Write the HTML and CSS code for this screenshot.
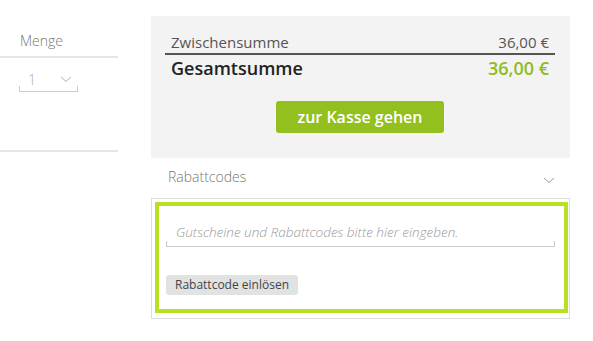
FILE: index.html
```html
<!DOCTYPE html>
<html lang="de">
<head>
    <meta charset="UTF-8">
    <meta name="viewport" content="width=device-width, initial-scale=1.0">
    <title>Warenkorb</title>
    <link rel="stylesheet" href="styles.css">
</head>
<body>
    <div class="page">
        <div class="qty-col">
            <div class="qty-head">Menge</div>
            <div class="qty-body">
                <div class="qty-select">
                    <span>1</span>
                    <svg class="chev" width="12" height="7" viewBox="0 0 12 7"><path d="M1 1l5 4.5L11 1" fill="none" stroke="#ccc" stroke-width="1.2"/></svg>
                </div>
            </div>
        </div>

        <div class="summary-col">
            <div class="totals">
                <div class="row subtotal">
                    <span>Zwischensumme</span>
                    <span>36,00 €</span>
                </div>
                <div class="row total">
                    <span>Gesamtsumme</span>
                    <span class="price">36,00 €</span>
                </div>
                <div class="checkout">
                    <button class="checkout-btn">zur Kasse gehen</button>
                </div>
            </div>

            <div class="coupon-head">
                <span>Rabattcodes</span>
                <svg width="12" height="7" viewBox="0 0 12 7"><path d="M1 1l5 4.5L11 1" fill="none" stroke="#999" stroke-width="1"/></svg>
            </div>

            <div class="coupon-box">
                <div class="coupon-inner">
                    <input class="coupon-input" type="text" placeholder="Gutscheine und Rabattcodes bitte hier eingeben.">
                    <button class="coupon-btn">Rabattcode einlösen</button>
                </div>
            </div>
        </div>
    </div>
</body>
</html>
```

FILE: styles.css
```css
body {
    margin: 0;
    padding: 0;
    background: #fff;
    font-family: 'Open Sans', 'Liberation Sans', sans-serif;
    color: #333;
}
.page {
    display: flex;
    align-items: flex-start;
}
.qty-col {
    width: 118px;
    padding-top: 31px;
}
.qty-head {
    padding-left: 20px;
    font-size: 14px;
    font-weight: 300;
    color: #777;
    line-height: 20px;
    padding-bottom: 5px;
    border-bottom: 2px solid #e6e6e6;
}
.qty-body {
    height: 94px;
    border-bottom: 2px solid #e6e6e6;
    padding-top: 10px;
    box-sizing: border-box;
}
.qty-select {
    margin-left: 19px;
    width: 59px;
    height: 24px;
    display: flex;
    align-items: center;
    justify-content: space-between;
    padding: 0 6px 0 9px;
    box-sizing: border-box;
    font-size: 14px;
    font-weight: 300;
    color: #aaa;
    border-bottom: 1px solid #ccc;
    background:
        linear-gradient(#ccc, #ccc) left bottom / 1px 5px no-repeat,
        linear-gradient(#ccc, #ccc) right bottom / 1px 5px no-repeat;
}
.summary-col {
    margin-left: 33px;
    margin-top: 16px;
    width: 419px;
}
.totals {
    background: #f3f3f3;
    padding: 16px 15px 25px 14px;
}
.row {
    display: flex;
    justify-content: space-between;
    padding: 0 6px;
}
.subtotal {
    font-size: 15px;
    line-height: 21px;
    color: #555;
    border-bottom: 2px solid #555;
}
.total {
    margin-top: 1px;
    font-size: 18px;
    font-weight: 550;
    line-height: 24px;
    color: #222;
}
.total .price {
    font-weight: 600;
    color: #8fbc1f;
}
.checkout {
    display: flex;
    justify-content: center;
    margin-top: 21px;
}
.checkout-btn {
    width: 168px;
    height: 32px;
    border: none;
    border-radius: 3px;
    background: #93c01f;
    color: #fff;
    font-family: 'Open Sans', 'Liberation Sans', sans-serif;
    font-size: 16px;
    font-weight: 600;
    cursor: pointer;
}
.coupon-head {
    display: flex;
    justify-content: space-between;
    align-items: center;
    height: 40px;
    padding: 0 15px 0 17px;
    box-sizing: border-box;
    padding-bottom: 3px;
    font-size: 14px;
    font-weight: 300;
    color: #777;
}
.coupon-head svg {
    margin-top: 8px;
}
.coupon-box {
    border: 1px solid #ddd;
    padding: 3px 1px 5px 3px;
}
.coupon-inner {
    border: 4px solid #b8e124;
    padding: 13px 9px 14px 7px;
    display: flex;
    flex-direction: column;
    align-items: flex-start;
}
.coupon-input {
    width: 100%;
    height: 28px;
    box-sizing: border-box;
    border: none;
    border-bottom: 1px solid #ccc;
    background:
        linear-gradient(#ccc, #ccc) left bottom / 1px 5px no-repeat,
        linear-gradient(#ccc, #ccc) right bottom / 1px 5px no-repeat;
    padding: 0 10px 2px;
    font-family: 'Open Sans', 'Liberation Sans', sans-serif;
    font-size: 13.5px;
    font-style: italic;
    font-weight: 300;
    outline: none;
}
.coupon-input::placeholder {
    color: #999;
}
.coupon-btn {
    margin-top: 28px;
    height: 20px;
    padding: 0 9px;
    border: none;
    border-radius: 3px;
    background: #e1e3e3;
    color: #444;
    font-family: 'Open Sans', 'Liberation Sans', sans-serif;
    font-size: 12px;
    line-height: 20px;
}
```
